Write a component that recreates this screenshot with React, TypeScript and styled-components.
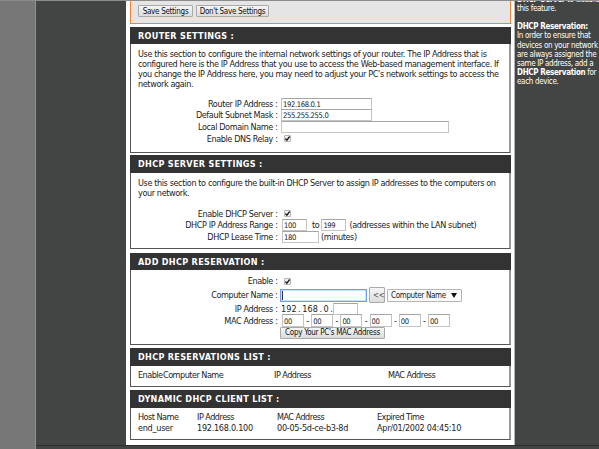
import React from "react";
import styled, { createGlobalStyle } from "styled-components";

const GlobalStyle = createGlobalStyle`
  * { box-sizing: border-box; }
  body {
    margin: 0;
    overflow: hidden;
    background: #434544;
    font-family: "DejaVu Sans Condensed", "DejaVu Sans", sans-serif;
    font-size: 9px;
    letter-spacing: -0.38px;
    color: #222;
  }
`;

const Page = styled.div`
  width: 599px;
  height: 449px;
  display: flex;
  border-top: 1px solid #8c8c8c;
  overflow: hidden;
`;

const Gutter = styled.div`
  width: 36px;
  flex: none;
  background: #777;
  border-right: 1px solid #8f8f8f;
`;

const Frame = styled.div`
  flex: 1;
  display: flex;
  flex-direction: column;
  min-width: 0;
`;

const Columns = styled.div`
  display: flex;
  height: 445px;
  border-bottom: 1px solid #2c2e2d;
`;

const NavSpace = styled.div`
  width: 90px;
  flex: none;
`;

const Content = styled.main`
  width: 389px;
  flex: none;
  display: flex;
  flex-direction: column;
  padding-left: 4px;
  padding-right: 3px;
  background: #fff;
  border-right: 1px solid #b4b4b4;
`;

const ActionBar = styled.div`
  height: 23px;
  flex: none;
  display: flex;
  align-items: flex-start;
  gap: 3px;
  padding: 4px 0 0 7px;
  margin-bottom: 3px;
  background: #e5e5e5;
  border: 1px solid #f0843a;
  border-top: 0;
`;

const Button = styled.button<{ $w: number; $h?: number }>`
  width: ${(p) => p.$w}px;
  height: ${(p) => p.$h ?? 12}px;
  flex: none;
  padding: 0;
  border: 1px solid #aaa;
  border-radius: 1px;
  background: linear-gradient(#f5f5f5, #dcdcdc);
  font: inherit;
  font-size: 8px;
  line-height: 9px;
  letter-spacing: -0.29px;
  white-space: nowrap;
  color: #111;
`;

const TransferButton = styled(Button)`
  padding-left: 3px;
  color: #555;
`;

const Panel = styled.section<{ $h: number; $gap: number }>`
  height: ${(p) => p.$h}px;
  flex: none;
  margin-bottom: ${(p) => p.$gap}px;
  border: solid #555;
  border-width: 0 2px 1px 1px;
  border-right-color: #999;
  background: #fff;
`;

const PanelTitle = styled.h2<{ $h?: number }>`
  height: ${(p) => p.$h ?? 17}px;
  margin: 0 -2px 0 -1px;
  padding-left: 8px;
  display: flex;
  align-items: center;
  background: #333;
  color: #fff;
  font-size: 9px;
  font-weight: bold;
  letter-spacing: 0.32px;
  white-space: nowrap;
`;

const Intro = styled.p<{ $after: number }>`
  margin: 5px 0 ${(p) => p.$after}px;
  padding-left: 7px;
  line-height: 10px;
  white-space: nowrap;
`;

const Fields = styled.div<{ $top?: number }>`
  display: flex;
  flex-direction: column;
  padding-top: ${(p) => p.$top ?? 0}px;
`;

const Row = styled.label<{ $h?: number }>`
  height: ${(p) => p.$h ?? 11.6}px;
  display: flex;
  align-items: center;
  white-space: nowrap;
`;

const Label = styled.span<{ $tight?: boolean }>`
  width: ${(p) => (p.$tight ? 149 : 150)}px;
  flex: none;
  padding-right: ${(p) => (p.$tight ? 2.5 : 3.5)}px;
  text-align: right;
`;

const Input = styled.input<{ $w: number; $h?: number }>`
  width: ${(p) => p.$w}px;
  height: ${(p) => p.$h ?? 12}px;
  flex: none;
  padding: 1px 0 0 1px;
  border: 1px solid #c4c4c4;
  border-top-color: #a5a5a5;
  background: #fff;
  font: inherit;
  font-size: 7.6px;
  letter-spacing: -0.35px;
  color: #222;
  outline: none;
`;

const FocusedInput = styled.div`
  width: 87px;
  height: 13px;
  flex: none;
  margin-right: 2px;
  padding: 1px;
  border: 1px solid #6f9fe8;
  box-shadow: inset 0 0 0 0.5px #9fc0f2;
  background: #fff;
`;

const Caret = styled.div`
  width: 1px;
  height: 9px;
  background: #333;
`;

const Note = styled.span<{ $l?: number; $r?: number }>`
  margin-left: ${(p) => p.$l ?? 0}px;
  margin-right: ${(p) => p.$r ?? 0}px;
`;

const IpPrefix = styled.span`
  width: 52px;
  letter-spacing: 0.05px;
  word-spacing: -1.1px;
`;

const MacGroup = styled.div`
  display: flex;
  align-items: center;
  padding-left: 1px;
`;

const Dash = styled.span`
  width: 7.2px;
  text-align: center;
`;

const Select = styled.div`
  width: 75px;
  height: 13px;
  margin-left: 2px;
  padding: 0 4px 0 3px;
  display: flex;
  align-items: center;
  justify-content: space-between;
  border: 1px solid #b5b5b5;
  border-radius: 1px;
  background: #fafafa;
  font-size: 8px;
  letter-spacing: -0.35px;
`;

const CheckFrame = styled.span`
  width: 7px;
  height: 7px;
  margin-left: 3px;
  display: flex;
  border: 1px solid #b5b5b5;
  border-radius: 1px;
  background: #f1f1f1;
`;

const Table = styled.div<{ $cols: string }>`
  display: grid;
  grid-template-columns: ${(p) => p.$cols};
  padding: 4px 0 0 7px;
  line-height: 10.6px;
  white-space: nowrap;
`;

const Th = styled.span`
  letter-spacing: -0.5px;
`;

const Td = styled.span`
  letter-spacing: -0.26px;
`;

const Help = styled.aside`
  flex: 1;
  margin-top: -6.5px;
  padding-left: 2px;
  color: #fff;
  font-size: 8px;
  line-height: 9.2px;
  letter-spacing: -0.34px;
  white-space: nowrap;
`;

const HelpText = styled.p`
  margin: 0 0 9.2px;
`;

const Checkbox = () => (
  <CheckFrame>
    <svg width="5" height="5" viewBox="0 0 5 5">
      <path d="M0.4 2.6 L1.9 4.2 L4.7 0.5" fill="none" stroke="#222" strokeWidth="1.4" />
    </svg>
  </CheckFrame>
);

const MAC = ["00", "00", "00", "00", "00", "00"];

export default function App() {
  return (
    <>
      <GlobalStyle />
      <Page>
        <Gutter />
        <Frame>
          <Columns>
            <NavSpace />
            <Content>
              <ActionBar>
                <Button $w={55}>Save Settings</Button>
                <Button $w={73}>Don't Save Settings</Button>
              </ActionBar>

              <Panel $h={126} $gap={2}>
                <PanelTitle>ROUTER SETTINGS :</PanelTitle>
                <Intro $after={9}>
                  Use this section to configure the internal network settings of your router. The IP Address that is
                  <br />
                  configured here is the IP Address that you use to access the Web-based management interface. If
                  <br />
                  you change the IP Address here, you may need to adjust your PC's network settings to access the
                  <br />
                  network again.
                </Intro>
                <Fields>
                  <Row><Label>Router IP Address :</Label><Input $w={91} defaultValue="192.168.0.1" /></Row>
                  <Row><Label>Default Subnet Mask :</Label><Input $w={91} defaultValue="255.255.255.0" /></Row>
                  <Row><Label>Local Domain Name :</Label><Input $w={168} /></Row>
                  <Row><Label>Enable DNS Relay :</Label><Checkbox /></Row>
                </Fields>
              </Panel>

              <Panel $h={94} $gap={4}>
                <PanelTitle $h={18}>DHCP SERVER SETTINGS :</PanelTitle>
                <Intro $after={10}>
                  Use this section to configure the built-in DHCP Server to assign IP addresses to the computers on
                  <br />
                  your network.
                </Intro>
                <Fields>
                  <Row><Label>Enable DHCP Server :</Label><Checkbox /></Row>
                  <Row>
                    <Label>DHCP IP Address Range :</Label>
                    <Note $l={1} />
                    <Input $w={25} defaultValue="100" />
                    <Note $l={5} $r={2}>to</Note>
                    <Input $w={25} defaultValue="199" />
                    <Note $l={3}>(addresses within the LAN subnet)</Note>
                  </Row>
                  <Row>
                    <Label>DHCP Lease Time :</Label>
                    <Note $l={1} />
                    <Input $w={37} defaultValue="180" />
                    <Note $l={2}>(minutes)</Note>
                  </Row>
                </Fields>
              </Panel>

              <Panel $h={92} $gap={3}>
                <PanelTitle>ADD DHCP RESERVATION :</PanelTitle>
                <Fields $top={5}>
                  <Row $h={12}><Label>Enable :</Label><Checkbox /></Row>
                  <Row $h={16}>
                    <Label $tight>Computer Name :</Label>
                    <FocusedInput><Caret /></FocusedInput>
                    <TransferButton $w={16} $h={16}>&lt;&lt;</TransferButton>
                    <Select>
                      Computer Name
                      <svg width="6" height="5" viewBox="0 0 6 5"><path d="M0 0H6L3 5Z" fill="#111" /></svg>
                    </Select>
                  </Row>
                  <Row $h={12}>
                    <Label>IP Address :</Label>
                    <IpPrefix>192 . 168 . 0 .</IpPrefix>
                    <Input $w={25} />
                  </Row>
                  <Row>
                    <Label>MAC Address :</Label>
                    <MacGroup>
                      {MAC.map((octet, i) => (
                        <React.Fragment key={i}>
                          {i > 0 && <Dash>-</Dash>}
                          <Input $w={22} $h={13} defaultValue={octet} />
                        </React.Fragment>
                      ))}
                    </MacGroup>
                  </Row>
                  <Row $h={12}>
                    <Label $tight />
                    <Button $w={105} $h={12}>Copy Your PC's MAC Address</Button>
                  </Row>
                </Fields>
              </Panel>

              <Panel $h={39} $gap={3}>
                <PanelTitle $h={18}>DHCP RESERVATIONS LIST :</PanelTitle>
                <Table $cols="25px 111px 114px 1fr">
                  <Th>Enable</Th><Th>Computer Name</Th><Th>IP Address</Th><Th>MAC Address</Th>
                </Table>
              </Panel>

              <Panel $h={50} $gap={0}>
                <PanelTitle $h={18}>DYNAMIC DHCP CLIENT LIST :</PanelTitle>
                <Table $cols="59px 80px 100px 1fr">
                  <Th>Host Name</Th><Th>IP Address</Th><Th>MAC Address</Th><Th>Expired Time</Th>
                  <Td>end_user</Td><Td>192.168.0.100</Td><Td>00-05-5d-ce-b3-8d</Td><Td>Apr/01/2002 04:45:10</Td>
                </Table>
              </Panel>
            </Content>
            <Help>
              <HelpText>
                <b>DHCP Server</b> to disable
                <br />
                this feature.
              </HelpText>
              <HelpText>
                <b>DHCP Reservation:</b>
                <br />
                In order to ensure that
                <br />
                devices on your network
                <br />
                are always assigned the
                <br />
                same IP address, add a
                <br />
                <b>DHCP Reservation</b> for
                <br />
                each device.
              </HelpText>
            </Help>
          </Columns>
        </Frame>
      </Page>
    </>
  );
}
